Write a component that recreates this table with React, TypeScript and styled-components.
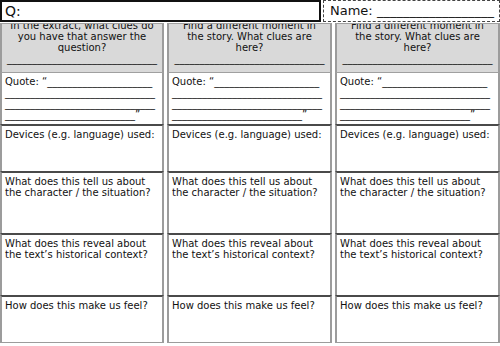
import React from "react"
import styled, { createGlobalStyle } from "styled-components"

const GlobalStyle = createGlobalStyle`
  html, body {
    margin: 0;
    padding: 0;
    background: #ffffff;
  }
  body {
    font-family: "DejaVu Sans", "Liberation Sans", sans-serif;
    color: #111;
  }
`

const Sheet = styled.div`
  width: 500px;
  height: 346px;
  background: #fff;
  overflow: hidden;
`

const TopBar = styled.div`
  display: grid;
  grid-template-columns: 321px 1fr;
  column-gap: 2px;
  height: 22px;
`

const QuestionBox = styled.div`
  box-sizing: border-box;
  border: 2px solid #111;
  font-size: 14px;
  line-height: 18px;
  padding-left: 3px;
  white-space: nowrap;
`

const NameBox = styled.div`
  box-sizing: border-box;
  border: 1px dashed #444;
  font-size: 13px;
  line-height: 19px;
  padding-left: 6px;
  white-space: nowrap;
  overflow: hidden;
`

const Grid = styled.div`
  margin-top: 1px;
  display: grid;
  grid-template-columns: 164px 165px 165px;
  grid-template-rows: 49px 52px 47px 62px 62px 48px;
  column-gap: 3px;
`

const Cell = styled.div<{ $head?: boolean; $dark?: boolean; $last?: boolean }>`
  box-sizing: border-box;
  overflow: hidden;
  background: ${({ $head }) => ($head ? "#d9d9d9" : "#fff")};
  border-left: 2px solid #9c9c9c;
  border-right: 2px solid #9c9c9c;
  border-top: ${({ $dark }) => ($dark ? "2px solid #4a4a4a" : "1px solid #a0a0a0")};
  border-bottom: ${({ $last }) => ($last ? "1px solid #9c9c9c" : "0")};
  font-size: 10px;
  line-height: 11px;
  text-align: ${({ $head }) => ($head ? "center" : "left")};
  padding: ${({ $head, $dark }) => ($head ? "0 2px" : $dark ? "3px 3px 0" : "3px 3px 0")};
`

const HeadText = styled.div`
  margin-top: -4px;
`

const Line = styled.div`
  white-space: nowrap;
`

const Rule = styled.div`
  white-space: nowrap;
`

const u = (n: number) => "_".repeat(n)

const columns = [
  ["In the extract, what clues do", "you have that answer the", "question?"],
  ["Find a different moment in", "the story. What clues are", "here?"],
  ["Find a different moment in", "the story. What clues are", "here?"],
]

const prompts = [
  ["Devices (e.g. language) used:"],
  ["What does this tell us about", "the character / the situation?"],
  ["What does this reveal about", "the text\u2019s historical context?"],
  ["How does this make us feel?"],
]

export default function App() {
  return (
    <Sheet>
      <GlobalStyle />
      <TopBar>
        <QuestionBox>Q:</QuestionBox>
        <NameBox>Name: {u(18)}</NameBox>
      </TopBar>
      <Grid>
        {columns.map((head, i) => (
          <Cell key={`h${i}`} $head style={{ gridColumn: i + 1, gridRow: 1 }}>
            <HeadText>
              {head.map((t) => (
                <Line key={t}>{t}</Line>
              ))}
              <Rule>{u(30)}</Rule>
            </HeadText>
          </Cell>
        ))}
        {columns.map((_, i) => (
          <Cell key={`q${i}`} style={{ gridColumn: i + 1, gridRow: 2 }}>
            <Line>Quote: {"\u201C"}{u(21)}</Line>
            <Rule>{u(30)}</Rule>
            <Rule>{u(30)}</Rule>
            <Rule>{u(26)}{"\u201D"}</Rule>
          </Cell>
        ))}
        {prompts.map((p, r) =>
          columns.map((_, i) => (
            <Cell
              key={`p${r}-${i}`}
              $dark
              $last={r === prompts.length - 1}
              style={{ gridColumn: i + 1, gridRow: r + 3 }}
            >
              {p.map((t) => (
                <Line key={t}>{t}</Line>
              ))}
            </Cell>
          ))
        )}
      </Grid>
    </Sheet>
  )
}
